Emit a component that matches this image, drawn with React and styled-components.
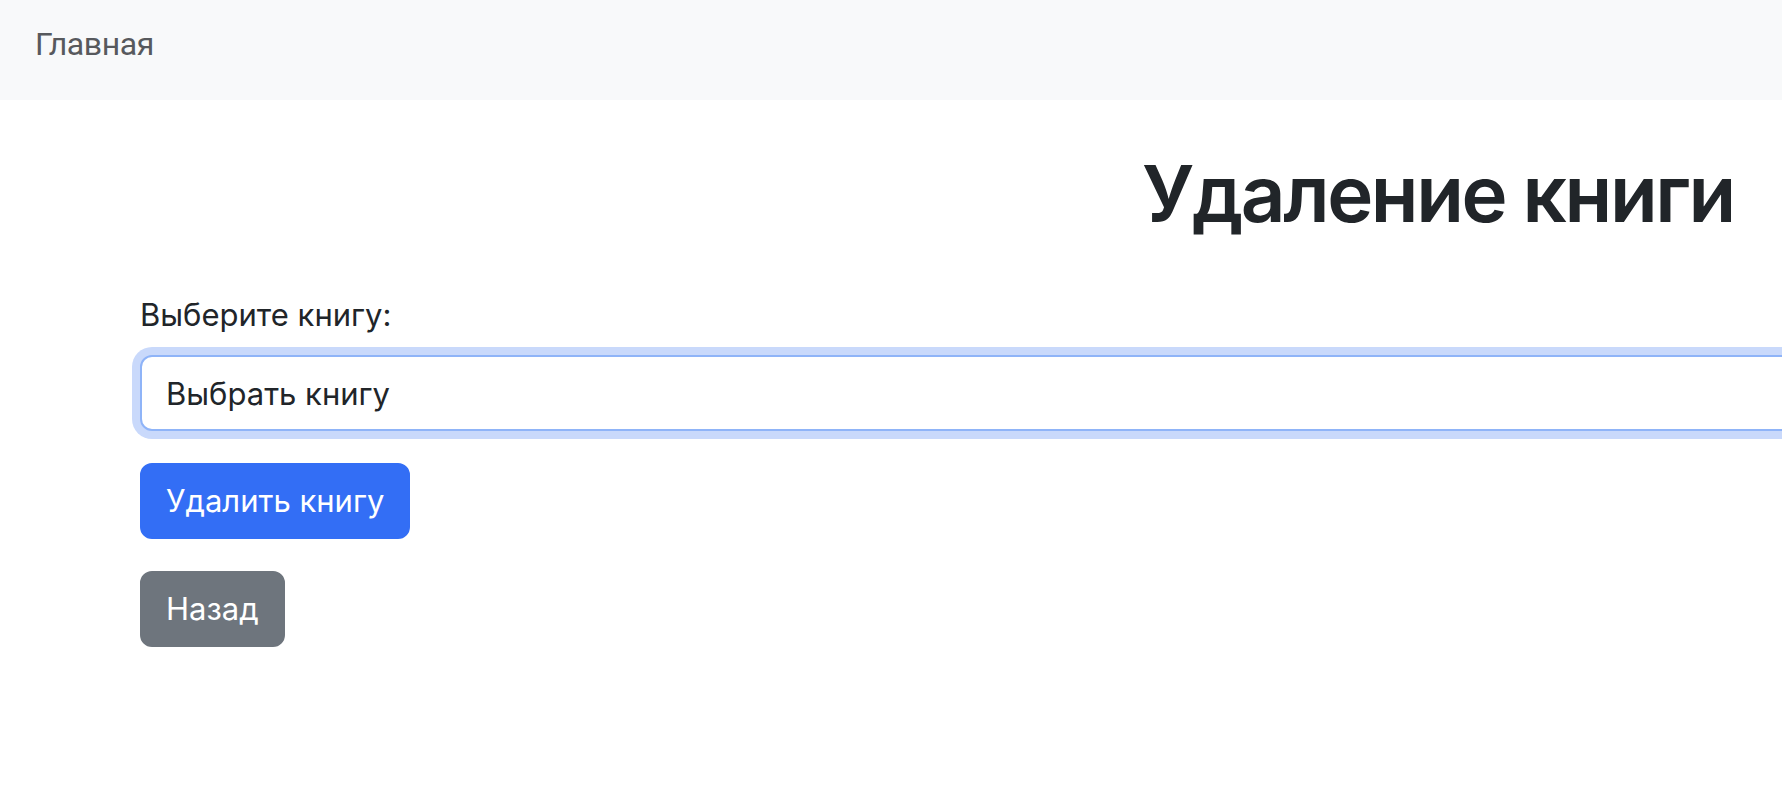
import React from "react";
import styled, { createGlobalStyle } from "styled-components";

const Global = createGlobalStyle`
  html, body { margin: 0; padding: 0; background: #ffffff; }
  body { font-family: Inter, "Noto Sans", sans-serif; color: #212529; overflow: hidden; }
  * { box-sizing: border-box; }
`;

const Page = styled.div`
  width: 1782px;
  height: 806px;
  overflow: hidden;
  display: flex;
  flex-direction: column;
`;

const NavBar = styled.nav`
  height: 100px;
  flex: none;
  background: #f8f9fa;
  display: flex;
  align-items: center;
  padding-left: 35px;
`;

const NavLink = styled.a`
  font-family: Roboto, "Liberation Sans", sans-serif;
  font-size: 32px;
  letter-spacing: -0.4px;
  line-height: 48px;
  color: #57595d;
  text-decoration: none;
  margin-top: -12px;
`;

const Container = styled.main`
  width: 2596px;
  flex: none;
  margin-left: 140px;
  display: flex;
  flex-direction: column;
  align-items: flex-start;
`;

const Title = styled.h1`
  align-self: stretch;
  text-align: center;
  font-family: Inter, "Noto Sans", sans-serif;
  font-weight: 600;
  font-size: 78px;
  letter-spacing: -2.4px;
  line-height: 96px;
  margin: 46px 0 49px;
  color: #212529;
`;

const Label = styled.label`
  font-size: 31px;
  line-height: 48px;
  margin-bottom: 16px;
  color: #212529;
`;

const Select = styled.div`
  align-self: stretch;
  height: 76px;
  border: 2px solid #8fb4f8;
  border-radius: 12px;
  box-shadow: 0 0 0 8px #c9d9fb;
  padding: 0 24px;
  display: flex;
  align-items: center;
  font-size: 31px;
  color: #212529;
  margin-bottom: 32px;
  background: #fff;
`;

const Button = styled.button`
  font-family: Inter, "Noto Sans", sans-serif;
  font-size: 31px;
  line-height: 48px;
  padding: 12px 24px;
  border: 2px solid ${(p) => p.$bg};
  border-radius: 12px;
  background: ${(p) => p.$bg};
  color: #ffffff;
  margin-bottom: 32px;
  cursor: pointer;
`;

export default function App() {
  return (
    <>
      <Global />
      <Page>
        <NavBar>
          <NavLink href="#">Главная</NavLink>
        </NavBar>
        <Container>
          <Title>Удаление книги</Title>
          <Label>Выберите книгу:</Label>
          <Select>Выбрать книгу</Select>
          <Button $bg="#336ef5">Удалить книгу</Button>
          <Button $bg="#6e757d">Назад</Button>
        </Container>
      </Page>
    </>
  );
}
